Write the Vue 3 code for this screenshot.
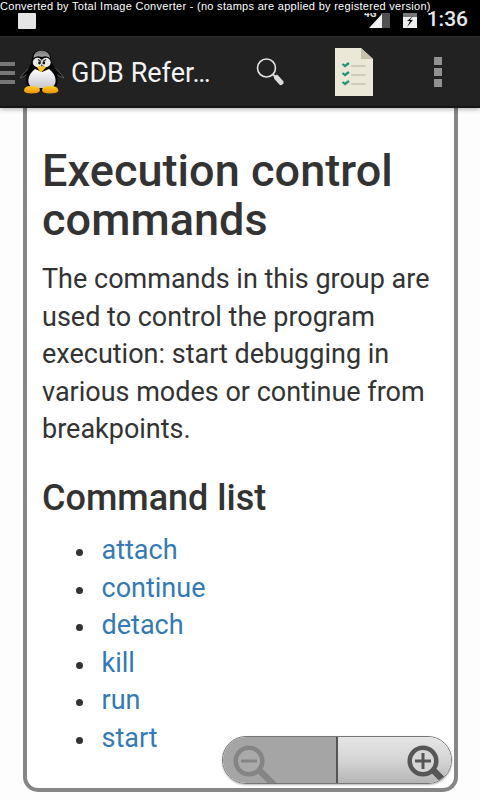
<template>
  <div class="screen">
    <div class="status-bar">
      <span class="stamp">Converted by Total Image Converter - (no stamps are applied by registered version)</span>
      <span class="notification"></span>
      <div class="indicators">
        <span class="network">4G</span>
        <svg class="signal" viewBox="0 0 21 15" width="21" height="15">
          <path d="M12 0h9v15h-9z" fill="#515151" />
          <path d="M0 15L13 1v14z" fill="#f1f1f1" />
        </svg>
        <svg class="battery" viewBox="0 0 14 15" width="14" height="15">
          <path d="M0 0h14v15H0z" fill="#eee" />
          <path d="M0 0h14v4H0z" fill="#777" />
          <path d="M10 3L4 8h3l-3 6 6-7H7z" fill="#111" />
        </svg>
        <span class="clock">1:36</span>
      </div>
    </div>

    <header class="action-bar">
      <div class="drawer"><i></i><i></i><i></i></div>
      <svg class="logo" viewBox="0 0 46 46" width="46" height="46">
        <defs>
          <linearGradient id="belly" x1="0" y1="0" x2="0" y2="1">
            <stop offset="0" stop-color="#fff" />
            <stop offset="1" stop-color="#c6c7cf" />
          </linearGradient>
          <linearGradient id="foot" x1="0" y1="0" x2="0" y2="1">
            <stop offset="0" stop-color="#ffd02c" />
            <stop offset="1" stop-color="#ec8f00" />
          </linearGradient>
          <linearGradient id="cap" x1="0" y1="0" x2="0" y2="1">
            <stop offset="0" stop-color="#777" />
            <stop offset="1" stop-color="#aaa" />
          </linearGradient>
        </defs>
        <path d="M11 18Q6 22 1 29Q5 28 9 25M35 18Q40 22 45 29Q41 28 37 25" fill="#0b0b0b" stroke="#666" stroke-width=".8" />
        <path d="M22.500 1C15 1 12.500 6 12.500 14C8 20 6 29 8 36Q15 43 23 42Q32 43 38 36C40 28 38 20 32.500 14C32.500 6 30 1 22.500 1z" fill="#050505" />
        <path d="M14.500 9Q15 1.500 22.500 1.500T31 9Q27 6 23 8Q18 6 14.500 9z" fill="url(#cap)" />
        <path d="M16 20C8 26 7 36 14 39H32C39 36 38 26 30 20L23 23z" fill="url(#belly)" />
        <ellipse cx="18.500" cy="13.500" rx="4.700" ry="4.700" fill="#e8e8e8" />
        <ellipse cx="27" cy="13.500" rx="4.700" ry="4.700" fill="#e8e8e8" />
        <path d="M19 10.500l3 2M27 10.500l-3 2" stroke="#222" stroke-width="1.200" />
        <circle cx="20.500" cy="14" r="1.400" fill="#111" />
        <circle cx="24.800" cy="14" r="1.400" fill="#111" />
        <path d="M18 18.500Q22 15 27 18.500L22 23.500z" fill="#ffc41d" />
        <path d="M5 42Q5 37 12 37Q21 37 21 41Q21 44.500 12 44.500Q6 44.500 5 42zM23 41Q23 37 32 37Q39 37 39.500 42Q38 44.500 31 44.500Q23 44.500 23 41z" fill="url(#foot)" />
      </svg>
      <h1 class="title">GDB Refer…</h1>
      <svg class="search" viewBox="0 0 28 28" width="28" height="28">
        <circle cx="10.500" cy="10" r="9" fill="none" stroke="#e4e4e4" stroke-width="1.600" />
        <path d="M16.500 16l3 3" stroke="#d5d5d5" stroke-width="2" />
        <path d="M20.500 19.500l4.500 5" stroke="#ddd" stroke-width="5" stroke-linecap="round" />
      </svg>
      <svg class="checklist" viewBox="0 0 38 48" width="38" height="48">
        <path d="M0 0h26l12 11v37H0z" fill="#ece8d8" />
        <path d="M26 0l12 11H26z" fill="#c6c1aa" />
        <g v-for="y in [17, 26, 35]" :key="y">
          <path :d="`M16 ${y + 1}h14.500`" stroke="#c7c1b4" stroke-width="1.500" />
          <path :d="`M7.500 ${y - 1}l2.500 2 4-3`" fill="none" stroke="#219477" stroke-width="2.200" />
        </g>
      </svg>
      <div class="overflow"><i></i><i></i><i></i></div>
    </header>

    <main class="page">
      <article class="card">
        <h1>Execution control commands</h1>
        <p>The commands in this group are used to control the program execution: start debugging in various modes or continue from breakpoints.</p>
        <h2>Command list</h2>
        <ul>
          <li v-for="command in commands" :key="command"><a href="#">{{ command }}</a></li>
        </ul>
      </article>
    </main>

    <div class="zoom-controls">
      <button class="zoom-out" disabled aria-label="Zoom out">
        <svg viewBox="0 0 44 38" width="44" height="38">
          <path d="M26 25L43 42" stroke="#858585" stroke-width="6.500" />
          <circle cx="16" cy="16" r="13.300" fill="#aaa" stroke="#858585" stroke-width="4.500" />
          <path d="M8 16h16" stroke="#858585" stroke-width="3" />
        </svg>
      </button>
      <button class="zoom-in" aria-label="Zoom in">
        <svg viewBox="0 0 44 38" width="44" height="38">
          <path d="M26 25L43 42" stroke="#565656" stroke-width="6.500" />
          <circle cx="16" cy="16" r="13.300" fill="#d6d6d6" stroke="#565656" stroke-width="4.500" />
          <path d="M8 16h16M16 8v16" stroke="#565656" stroke-width="3" />
        </svg>
      </button>
    </div>
  </div>
</template>

<script setup>
const commands = ['attach', 'continue', 'detach', 'kill', 'run', 'start']
</script>

<style>
body {
  margin: 0;
  overflow: hidden;
}
</style>

<style scoped>
.screen {
  position: relative;
  display: flex;
  flex-direction: column;
  width: 480px;
  height: 800px;
  overflow: hidden;
  background: #fdfdfd;
  color: #333;
  font-family: Roboto, sans-serif;
}

.status-bar {
  position: relative;
  display: flex;
  flex: none;
  box-sizing: border-box;
  height: 36px;
  padding: 13px 12px 0 18px;
  background: #000;
}

.stamp {
  position: absolute;
  top: 0;
  left: 0;
  z-index: 1;
  background: #000;
  color: #fff;
  font: 11px/13px "Liberation Sans", sans-serif;
  letter-spacing: 0.29px;
  white-space: nowrap;
}

.notification {
  width: 18px;
  height: 16px;
  border-radius: 1px;
  background: #e5e5e5;
}

.indicators {
  display: flex;
  align-items: flex-start;
  margin-left: auto;
}

.network {
  margin-top: -4px;
  color: #ddd;
  font-size: 10px;
  font-weight: 700;
  line-height: 10px;
}

.signal {
  margin: 0 13px 0 -8px;
}

.battery {
  margin-right: 11px;
}

.clock {
  margin: -6px 0 0 -1px;
  color: #e8e8e8;
  font-size: 21px;
  font-weight: 500;
  line-height: 25px;
}

.action-bar {
  position: relative;
  z-index: 1;
  display: flex;
  flex: none;
  align-items: center;
  box-sizing: border-box;
  height: 72px;
  border-top: 1px solid #2c2c2c;
  border-bottom: 2px solid #161616;
  background: #222;
  box-shadow: 0 1px 5px rgba(0, 0, 0, 0.35);
}

.drawer {
  display: grid;
  gap: 5px;
  width: 15px;
  margin: 2px 4px 0 0;
}

.drawer i {
  height: 4px;
  background: #777;
}

.logo {
  margin-right: 6px;
}

.title {
  width: 185px;
  margin: 2px 0 0;
  color: #f3f3f3;
  font-size: 27px;
  font-weight: 400;
  line-height: 32px;
}

.search {
  margin-right: 51px;
}

.checklist {
  margin-right: 61px;
}

.overflow {
  display: grid;
  gap: 3px;
}

.overflow i {
  width: 8px;
  height: 8px;
  background: #919191;
}

.page {
  padding: 0 22.5px 8.5px;
}

.card {
  box-sizing: border-box;
  height: 683.5px;
  padding: 38px 15px 0 15.5px;
  border: 4.5px solid #868686;
  border-top: 0;
  border-radius: 0 0 15px 15px;
  background: #fff;
}

.card h1 {
  margin: 0 -5px 17px 0;
  font-size: 45px;
  font-weight: 500;
  letter-spacing: 0.06px;
  line-height: 49px;
}

.card p {
  margin: 0 -5px 0 0;
  font-size: 27px;
  line-height: 37.5px;
}

.card h2 {
  margin: 29px 0 14.5px;
  font-size: 36px;
  font-weight: 500;
  line-height: 40px;
}

.card ul {
  margin: 0;
  padding-left: 34px;
  font-size: 27px;
  line-height: 37.5px;
  list-style: none;
}

.card li {
  display: flex;
  align-items: center;
}

.card li::before {
  content: "";
  width: 7px;
  height: 7px;
  margin: 4px 18.5px 0 0;
  border-radius: 50%;
  background: #333;
}

.card a {
  color: #337ab7;
  text-decoration: none;
}

/* floats over the lower right corner of the page */
.zoom-controls {
  position: absolute;
  right: 28px;
  bottom: 16px;
  display: flex;
  box-sizing: border-box;
  width: 230px;
  height: 48px;
  overflow: hidden;
  border: 1px solid #777;
  border-radius: 24px;
  box-shadow: 0 1px 2px rgba(0, 0, 0, 0.3);
}

.zoom-controls button {
  display: flex;
  align-items: flex-end;
  box-sizing: border-box;
  width: 50%;
  padding: 0;
  border: 0;
}

.zoom-controls .zoom-out {
  width: 115px;
  padding-left: 10px;
  border-right: 2px solid #555;
  background: #a5a5a5;
}

.zoom-controls .zoom-in {
  justify-content: flex-end;
  background: linear-gradient(#e5e5e5, #d5d5d5 50%, #b5b5b5);
}
</style>
